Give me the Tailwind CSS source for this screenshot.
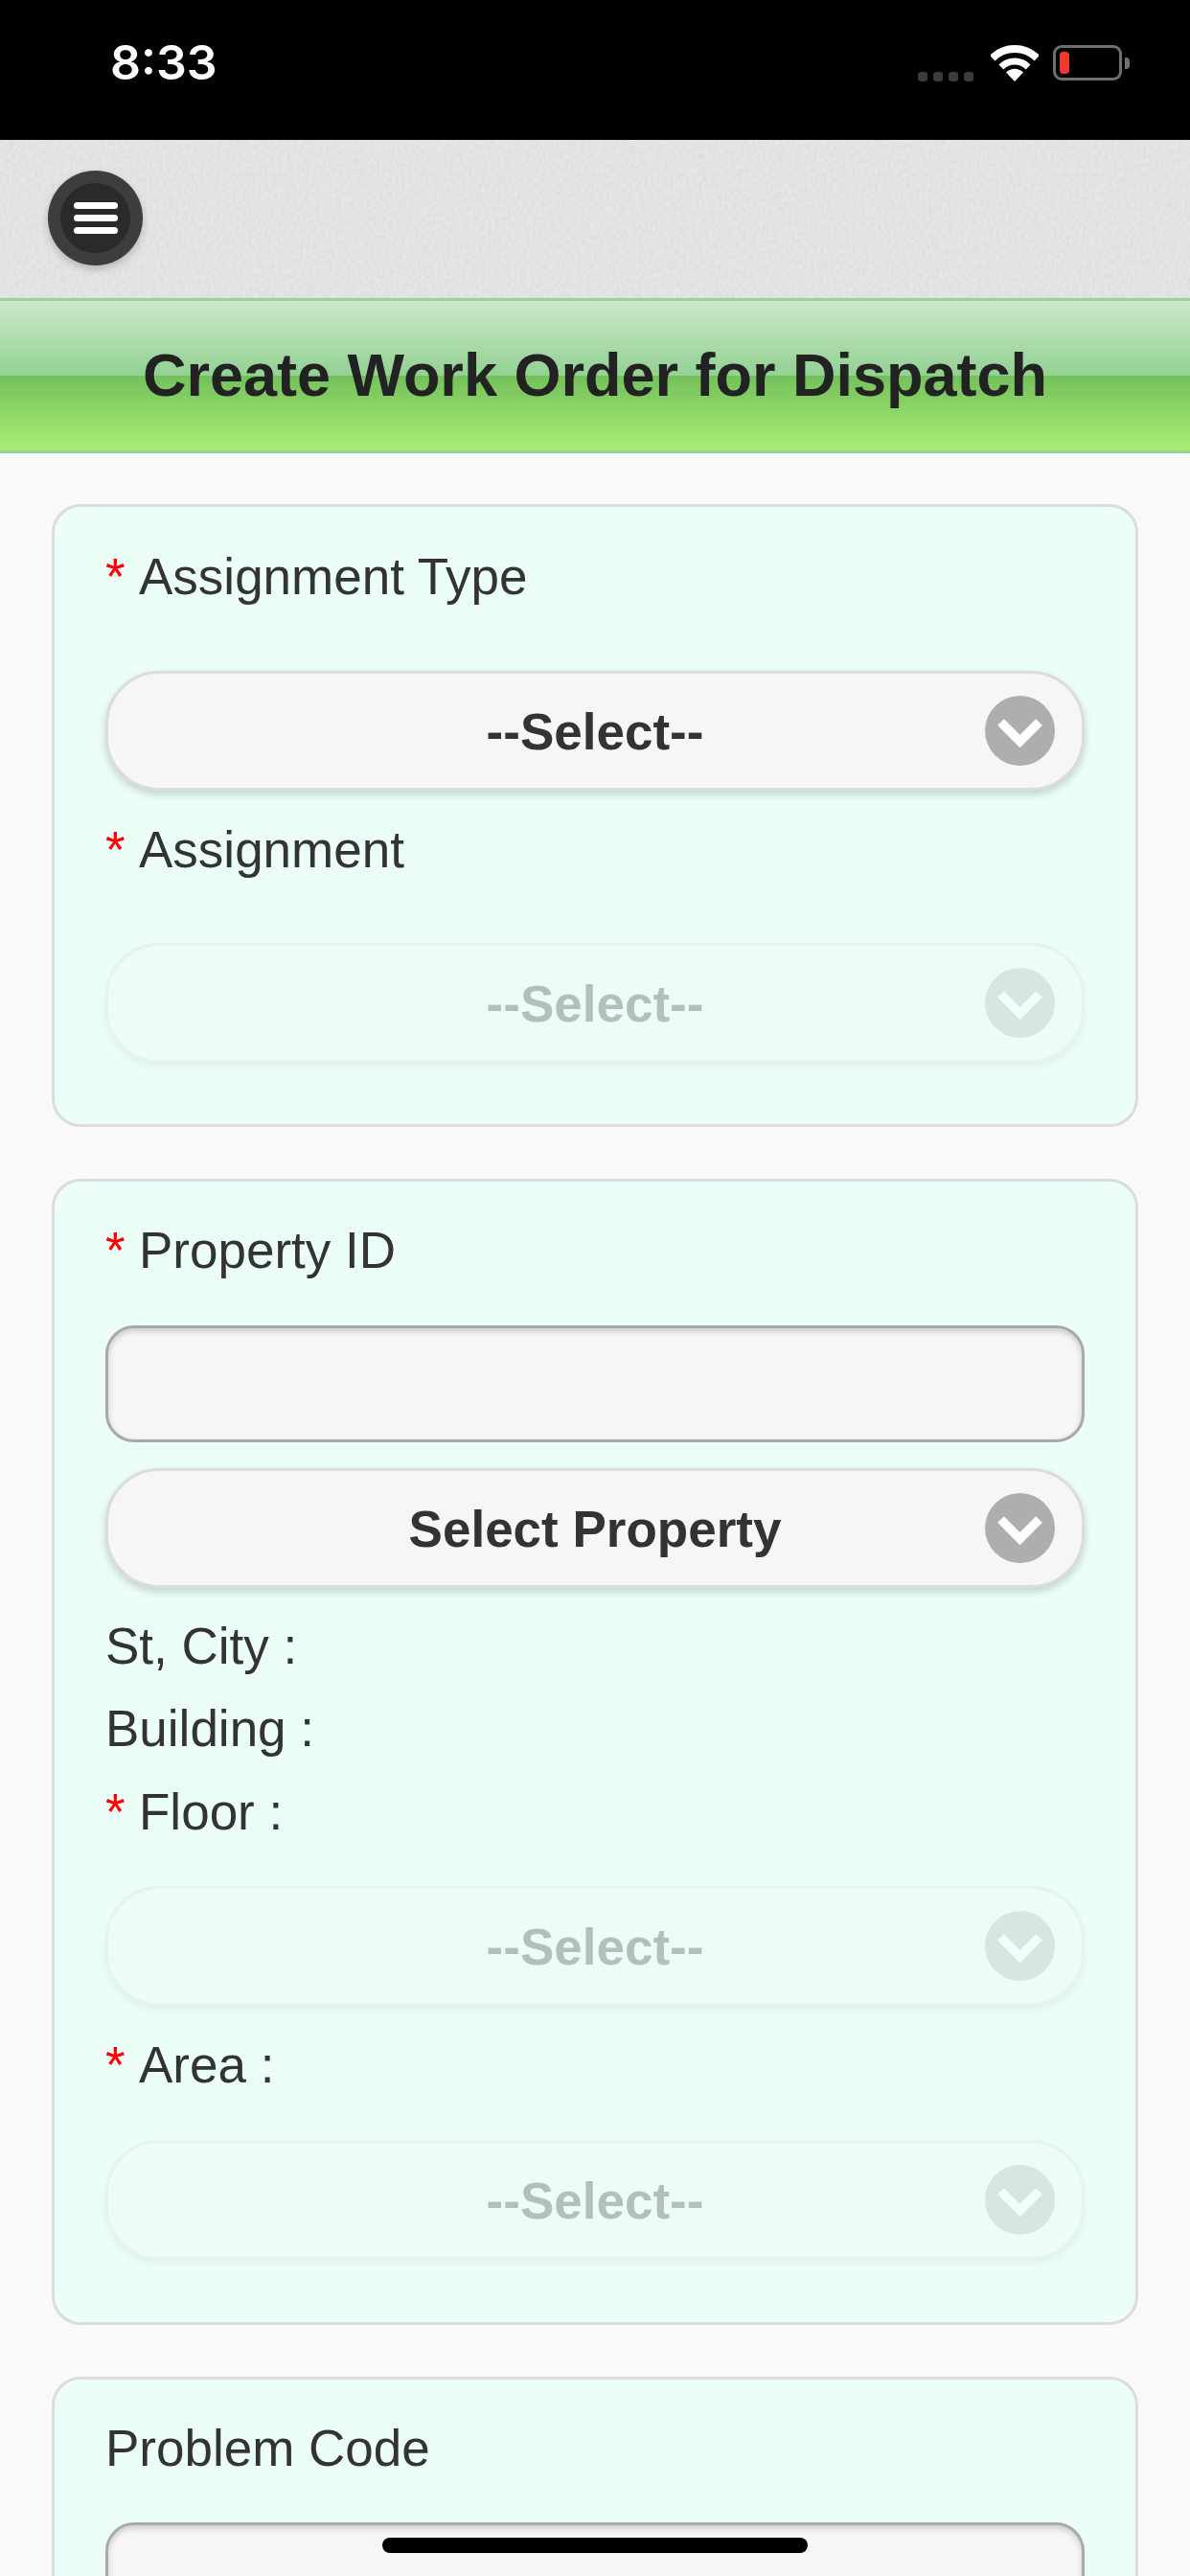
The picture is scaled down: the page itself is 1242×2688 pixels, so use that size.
<!DOCTYPE html>
<html>
<head>
<meta charset="utf-8">
<script src="https://cdn.jsdelivr.net/npm/@tailwindcss/browser@4"></script>
</head>
<body class="m-0 bg-[#f9f9f9]">
<div class="relative w-[1242px] h-[2688px] overflow-hidden bg-[#f9f9f9] font-['Liberation_Sans',Arial,sans-serif] text-[53px] leading-[62px] text-[#333]">

  <!-- status bar -->
  <div class="h-[146px] bg-black flex items-start justify-between pl-[115px] pr-[71px] pt-[37px]">
    <span class="font-['Inter',sans-serif] font-semibold text-[50px] leading-[56px] text-white">8:33</span>
    <div class="flex items-start pt-[10px]">
      <div class="flex gap-[6px] mt-[28px] mr-[18px]">
        <span class="w-[10px] h-[10px] rounded-[3px] bg-[#3a3a3a]"></span>
        <span class="w-[10px] h-[10px] rounded-[3px] bg-[#3a3a3a]"></span>
        <span class="w-[10px] h-[10px] rounded-[3px] bg-[#3a3a3a]"></span>
        <span class="w-[10px] h-[10px] rounded-[3px] bg-[#3a3a3a]"></span>
      </div>
      <svg class="mr-[15px]" width="50" height="38" viewBox="0 0 50 38">
        <path d="M1.7 13.7A33 33 0 0 1 48.3 13.7" fill="none" stroke="#fff" stroke-width="8"/>
        <path d="M10.9 22.9A20 20 0 0 1 39.1 22.9" fill="none" stroke="#fff" stroke-width="7"/>
        <path d="M25 38L16 28.5Q25 21 34 28.5Z" fill="#fff"/>
      </svg>
      <div class="relative w-[72px] h-[37px] rounded-[9px] border-[3px] border-[#6f6f6f]">
        <span class="absolute left-[4px] top-[4px] w-[10px] h-[23px] rounded-[4px] bg-[#f03a30]"></span>
        <span class="absolute right-[-11px] top-[10px] w-[5px] h-[12px] rounded-r-[4px] bg-[#6f6f6f]"></span>
      </div>
    </div>
  </div>

  <!-- textured header -->
  <header class="relative h-[165px] bg-[#e6e6e6] overflow-hidden">
    <svg class="absolute inset-0" width="1242" height="165">
      <filter id="grain"><feTurbulence type="fractalNoise" baseFrequency="0.3 0.2" numOctaves="3" seed="4"/><feColorMatrix values="0 0 0 0 0.55  0 0 0 0 0.55  0 0 0 0 0.55  0.45 0 0 0 -0.13"/></filter>
      <rect width="1242" height="165" filter="url(#grain)"/>
    </svg>
    <button class="absolute left-[50px] top-[32px] w-[99px] h-[99px] rounded-full bg-[#3d3d3d] flex items-center justify-center shadow-[0_4px_8px_rgba(0,0,0,0.2)]">
      <span class="w-[73px] h-[73px] rounded-full bg-[#2a2a2a] flex flex-col items-center justify-center gap-[6px]">
        <span class="w-[46px] h-[7px] rounded-full bg-white"></span>
        <span class="w-[46px] h-[7px] rounded-full bg-white"></span>
        <span class="w-[46px] h-[7px] rounded-full bg-white"></span>
      </span>
    </button>
  </header>

  <!-- title bar -->
  <div class="h-[162px] border-y-[3px] border-[#93d393] bg-[linear-gradient(#cbe8cb_0%,#93d193_50%,#74c05c_50%,#a8ef74_100%)] flex items-center justify-center">
    <h1 class="font-bold text-[63px] leading-[72px] text-[#222] pb-[2px]">Create Work Order for Dispatch</h1>
  </div>

  <main class="px-[54px] pt-[53px] flex flex-col gap-[54px]">

    <!-- card 1 -->
    <section class="h-[650px] bg-[#ebfff6] border-[3px] border-[#dcdcdc] rounded-[30px] px-[53px] pt-[42px]">
      <label class="block"><span class="inline-block w-[35px] text-[#f00]">*</span>Assignment Type</label>
      <div class="mt-[67px] relative h-[125px] pt-[3px] rounded-[56px] bg-[#f6f6f6] border-[3px] border-[#dcdcdc] shadow-[0_4px_9px_rgba(0,0,0,0.18)] flex items-center justify-center font-bold">
        --Select--
        <svg class="absolute right-[28px] top-[23px]" width="73" height="73" viewBox="0 0 73 73"><circle cx="36.5" cy="36.5" r="36.5" fill="#aeaeae"/><path d="M16.5 27.5L36.5 47.5L56.5 27.5" fill="none" stroke="#fff" stroke-width="9.5"/></svg>
      </div>
      <label class="block mt-[31px]"><span class="inline-block w-[35px] text-[#f00]">*</span>Assignment</label>
      <div class="mt-[66px] relative h-[125px] pt-[3px] rounded-[56px] bg-[#f6f6f6] border-[3px] border-[#dcdcdc] shadow-[0_4px_9px_rgba(0,0,0,0.18)] flex items-center justify-center font-bold opacity-30">
        --Select--
        <svg class="absolute right-[28px] top-[23px]" width="73" height="73" viewBox="0 0 73 73"><circle cx="36.5" cy="36.5" r="36.5" fill="#aeaeae"/><path d="M16.5 27.5L36.5 47.5L56.5 27.5" fill="none" stroke="#fff" stroke-width="9.5"/></svg>
      </div>
    </section>

    <!-- card 2 -->
    <section class="h-[1196px] bg-[#ebfff6] border-[3px] border-[#dcdcdc] rounded-[30px] px-[53px] pt-[41px]">
      <label class="block"><span class="inline-block w-[35px] text-[#f00]">*</span>Property ID</label>
      <input type="text" class="block mt-[47px] w-full h-[122px] rounded-[30px] bg-[#f6f6f6] border-[3px] border-[#a9a9a9] shadow-[inset_0_3px_6px_rgba(0,0,0,0.18)]">
      <div class="mt-[27px] relative h-[125px] pt-[3px] rounded-[56px] bg-[#f6f6f6] border-[3px] border-[#dcdcdc] shadow-[0_4px_9px_rgba(0,0,0,0.18)] flex items-center justify-center font-bold">
        Select Property
        <svg class="absolute right-[28px] top-[23px]" width="73" height="73" viewBox="0 0 73 73"><circle cx="36.5" cy="36.5" r="36.5" fill="#aeaeae"/><path d="M16.5 27.5L36.5 47.5L56.5 27.5" fill="none" stroke="#fff" stroke-width="9.5"/></svg>
      </div>
      <p class="mt-[30px]">St, City :</p>
      <p class="mt-[24px]">Building :</p>
      <label class="block mt-[25px]"><span class="inline-block w-[35px] text-[#f00]">*</span>Floor :</label>
      <div class="mt-[46px] relative h-[125px] pt-[3px] rounded-[56px] bg-[#f6f6f6] border-[3px] border-[#dcdcdc] shadow-[0_4px_9px_rgba(0,0,0,0.18)] flex items-center justify-center font-bold opacity-30">
        --Select--
        <svg class="absolute right-[28px] top-[23px]" width="73" height="73" viewBox="0 0 73 73"><circle cx="36.5" cy="36.5" r="36.5" fill="#aeaeae"/><path d="M16.5 27.5L36.5 47.5L56.5 27.5" fill="none" stroke="#fff" stroke-width="9.5"/></svg>
      </div>
      <label class="block mt-[31px]"><span class="inline-block w-[35px] text-[#f00]">*</span>Area :</label>
      <div class="mt-[47px] relative h-[125px] pt-[3px] rounded-[56px] bg-[#f6f6f6] border-[3px] border-[#dcdcdc] shadow-[0_4px_9px_rgba(0,0,0,0.18)] flex items-center justify-center font-bold opacity-30">
        --Select--
        <svg class="absolute right-[28px] top-[23px]" width="73" height="73" viewBox="0 0 73 73"><circle cx="36.5" cy="36.5" r="36.5" fill="#aeaeae"/><path d="M16.5 27.5L36.5 47.5L56.5 27.5" fill="none" stroke="#fff" stroke-width="9.5"/></svg>
      </div>
    </section>

    <!-- card 3 -->
    <section class="h-[400px] bg-[#ebfff6] border-[3px] border-[#dcdcdc] rounded-[30px] px-[53px] pt-[41px]">
      <label class="block">Problem Code</label>
      <input type="text" class="block mt-[46px] w-full h-[122px] rounded-[30px] bg-[#f6f6f6] border-[3px] border-[#a9a9a9] shadow-[inset_0_3px_6px_rgba(0,0,0,0.18)]">
    </section>
  </main>

  <!-- home indicator -->
  <div class="absolute left-[399px] top-[2648px] w-[444px] h-[16px] rounded-full bg-black"></div>
</div>
</body>
</html>
